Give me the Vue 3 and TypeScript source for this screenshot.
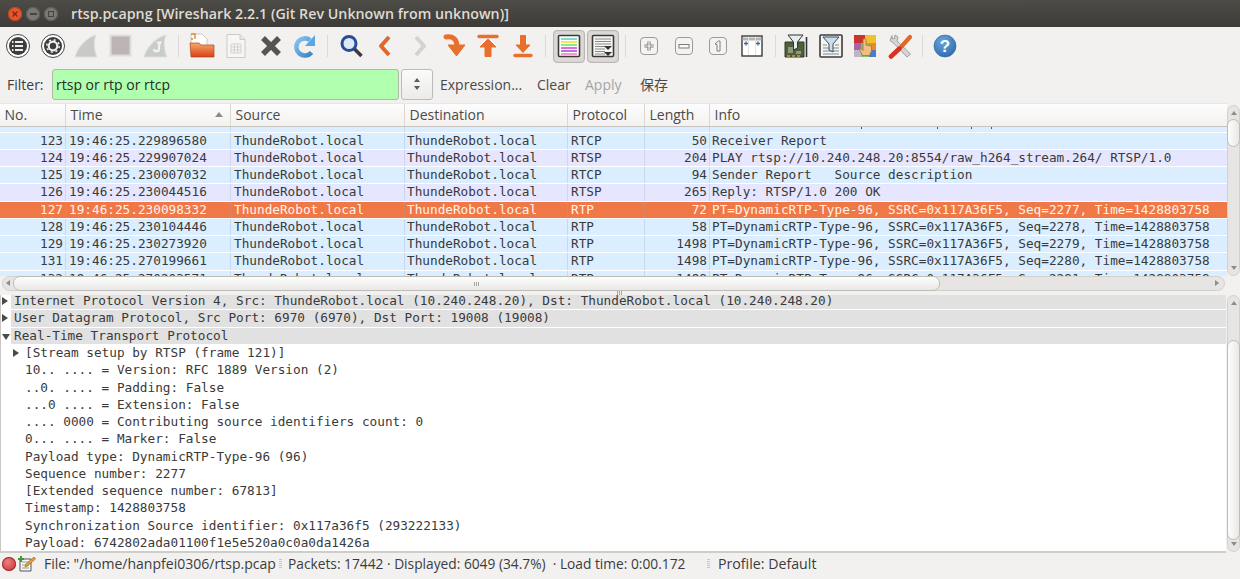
<script setup lang="ts">
interface Packet { no: string; time: string; proto: string; len: string; info: string; kind: string }
const pt = (s: string) => `PT=DynamicRTP-Type-96, SSRC=0x117A36F5, Seq=${s}, Time=1428803758`
const packets: Packet[] = [
  { no: '', time: '', proto: '', len: '', info: '', kind: 'blue' },
  { no: '123', time: '19:46:25.229896580', proto: 'RTCP', len: '50', info: 'Receiver Report', kind: 'blue' },
  { no: '124', time: '19:46:25.229907024', proto: 'RTSP', len: '204', info: 'PLAY rtsp://10.240.248.20:8554/raw_h264_stream.264/ RTSP/1.0', kind: 'lav' },
  { no: '125', time: '19:46:25.230007032', proto: 'RTCP', len: '94', info: 'Sender Report   Source description', kind: 'blue' },
  { no: '126', time: '19:46:25.230044516', proto: 'RTSP', len: '265', info: 'Reply: RTSP/1.0 200 OK', kind: 'lav' },
  { no: '127', time: '19:46:25.230098332', proto: 'RTP', len: '72', info: pt('2277'), kind: 'sel' },
  { no: '128', time: '19:46:25.230104446', proto: 'RTP', len: '58', info: pt('2278'), kind: 'blue' },
  { no: '129', time: '19:46:25.230273920', proto: 'RTP', len: '1498', info: pt('2279'), kind: 'blue' },
  { no: '131', time: '19:46:25.270199661', proto: 'RTP', len: '1498', info: pt('2280'), kind: 'blue' },
  { no: '132', time: '19:46:25.270203571', proto: 'RTP', len: '1498', info: pt('2281'), kind: 'blue' },
]
const ticks = [861, 937, 971, 991]
const sections = [
  'Internet Protocol Version 4, Src: ThundeRobot.local (10.240.248.20), Dst: ThundeRobot.local (10.240.248.20)',
  'User Datagram Protocol, Src Port: 6970 (6970), Dst Port: 19008 (19008)',
]
const fields = [
  '10.. .... = Version: RFC 1889 Version (2)',
  '..0. .... = Padding: False',
  '...0 .... = Extension: False',
  '.... 0000 = Contributing source identifiers count: 0',
  '0... .... = Marker: False',
  'Payload type: DynamicRTP-Type-96 (96)',
  'Sequence number: 2277',
  '[Extended sequence number: 67813]',
  'Timestamp: 1428803758',
  'Synchronization Source identifier: 0x117a36f5 (293222133)',
  'Payload: 6742802ada01100f1e5e520a0c0a0da1426a',
]
const columns = ['No.', 'Time', 'Source', 'Destination', 'Protocol', 'Length', 'Info']
</script>

<template>
  <div class="win">
    <header class="title">
      <span class="dot close"><svg width="8" height="8" viewBox="0 0 8 8"><path d="M1.5 1.5l5 5M6.5 1.5l-5 5" stroke="#7a2a12" stroke-width="1.4"/></svg></span>
      <span class="dot"><i class="dash"></i></span>
      <span class="dot"><i class="sq"></i></span>
      <span class="title-text">rtsp.pcapng [Wireshark 2.2.1 (Git Rev Unknown from unknown)]</span>
    </header>

    <div class="toolbar">
      <span class="tool"><svg width="26" height="26" viewBox="0 0 26 26"><circle cx="13" cy="13" r="11.5" fill="#fff" stroke="#444" stroke-width="1"/><circle cx="13" cy="13" r="9" fill="#3d3d3d"/><path d="M10 9h8M10 13h8M10 17h8" stroke="#eee" stroke-width="2"/><path d="M7 9h1.5M7 13h1.5M7 17h1.5" stroke="#eee" stroke-width="2"/></svg></span>
      <span class="tool"><svg width="26" height="26" viewBox="0 0 26 26"><circle cx="13" cy="13" r="11.5" fill="#fff" stroke="#444" stroke-width="1"/><circle cx="13" cy="13" r="9" fill="#3d3d3d"/><circle cx="13" cy="13" r="4.3" fill="none" stroke="#eee" stroke-width="2.2"/><circle cx="13" cy="13" r="6.2" fill="none" stroke="#eee" stroke-width="1.6" stroke-dasharray="2 2.87"/></svg></span>
      <span class="tool"><svg width="26" height="26" viewBox="0 0 26 26"><path d="M1 24C4 14 12 5 22 2c-3 6-2 16 1 22H1z" fill="#c9c9c7" stroke="#dededc"/></svg></span>
      <span class="tool"><svg width="26" height="26" viewBox="0 0 26 26"><rect x="2.5" y="2.5" width="20" height="20" fill="#bdb5b5" stroke="#dfdddb" stroke-width="2"/></svg></span>
      <span class="tool"><svg width="26" height="26" viewBox="0 0 26 26"><path d="M1 24C4 14 12 5 23 2c-3 6-2 16 1 22H1z" fill="#c9cdc7" stroke="#dededc"/><path d="M16 10v6c0 3-5 3-5 0" fill="none" stroke="#f1f1ef" stroke-width="2.2"/><path d="M13 9l6-1-2 5z" fill="#f1f1ef"/></svg></span>
      <span class="sep"></span>
      <span class="tool"><svg width="26" height="26" viewBox="0 0 26 26"><defs><linearGradient id="fo" x1="0" y1="0" x2="0" y2="1"><stop offset="0" stop-color="#f8a868"/><stop offset="1" stop-color="#d8401c"/></linearGradient></defs><path d="M2 1h11l5 5v8H2z" fill="#fff" stroke="#cfc8bc"/><path d="M2 6h2M2 1h4v5" fill="none" stroke="#d98a3a" stroke-width="1.400"/><path d="M1 10h9l2 2h13v12H2z" fill="url(#fo)" stroke="#a8481c" stroke-width=".7"/></svg></span>
      <span class="tool"><svg width="26" height="26" viewBox="0 0 26 26"><path d="M4 1.500h13l5 5v18H4z" fill="#f7f6f4" stroke="#cbcac6"/><path d="M17 1.500v5h5" fill="#e8e7e4" stroke="#cbcac6"/><path d="M8 11h10v9H8zM8 14h10M8 17h10M11.300 11v9M14.600 11v9" fill="none" stroke="#d2d1cd"/></svg></span>
      <span class="tool"><svg width="26" height="26" viewBox="0 0 26 26"><path d="M5 5l16 16M21 5L5 21" stroke="#555552" stroke-width="5.500"/></svg></span>
      <span class="tool"><svg width="26" height="26" viewBox="0 0 26 26"><defs><linearGradient id="rl" x1="0" y1="0" x2="1" y2="1"><stop offset="0" stop-color="#8cc4ee"/><stop offset="1" stop-color="#3a82c8"/></linearGradient></defs><path d="M19.500 19.500a8.600 8.600 0 1 1-1.500-12.500" fill="none" stroke="url(#rl)" stroke-width="4.600"/><path d="M23 2v11h-10z" fill="#5fa5e0"/></svg></span>
      <span class="sep"></span>
      <span class="tool"><svg width="26" height="26" viewBox="0 0 26 26"><circle cx="11" cy="10.500" r="7" fill="#dfe8f5" stroke="#2a4c98" stroke-width="3"/><path d="M16.500 16l7 7" stroke="#3a3a38" stroke-width="3.600"/></svg></span>
      <span class="tool"><svg width="26" height="26" viewBox="0 0 26 26"><path d="M17 4L9 13l8 9" fill="none" stroke="#e0672a" stroke-width="4" stroke-linejoin="round"/></svg></span>
      <span class="tool"><svg width="26" height="26" viewBox="0 0 26 26"><path d="M9 4l8 9-8 9" fill="none" stroke="#d3d2cf" stroke-width="4" stroke-linejoin="round"/></svg></span>
      <span class="tool"><svg width="26" height="26" viewBox="0 0 26 26"><path d="M5 4c7-1 11 2 11 10" fill="none" stroke="#e8702c" stroke-width="5" stroke-linecap="round"/><path d="M7 12h17l-8.500 11z" fill="#e8702c" stroke="#e8702c" stroke-linejoin="round"/></svg></span>
      <span class="tool"><svg width="26" height="26" viewBox="0 0 26 26"><path d="M4 3.500h18" stroke="#e8702c" stroke-width="3.400" stroke-linecap="round"/><path d="M5 14l8-8 8 8h-5v9.500h-6V14z" fill="#e8702c" stroke="#e8702c" stroke-linejoin="round"/></svg></span>
      <span class="tool"><svg width="26" height="26" viewBox="0 0 26 26"><path d="M5 22.500h16" stroke="#e8702c" stroke-width="3.400" stroke-linecap="round"/><path d="M6 12l7 7.500 7-7.500h-4.500V2.500h-5V12z" fill="#e8702c" stroke="#e8702c" stroke-linejoin="round"/></svg></span>
      <span class="sep"></span>
      <span class="tool on"><svg width="24" height="24" viewBox="0 0 24 24"><rect x="1.500" y="1.500" width="21" height="21" rx="1" fill="#fff" stroke="#3a3a38" stroke-width="1.600"/><path d="M4 5h16" stroke="#7fe0c8" stroke-width="2"/><path d="M4 8h16" stroke="#f2e85e" stroke-width="2"/><path d="M4 11h16" stroke="#8ee88a" stroke-width="2"/><path d="M4 14h16" stroke="#e070d8" stroke-width="2"/><path d="M4 17h16" stroke="#bf70e8" stroke-width="2"/><path d="M4 20h16" stroke="#f09ccc" stroke-width="2"/></svg></span>
      <span class="tool on"><svg width="24" height="24" viewBox="0 0 24 24"><rect x="1.500" y="1.500" width="21" height="21" rx="1" fill="#f5f5f3" stroke="#3a3a38" stroke-width="1.600"/><path d="M4 5h16M4 7.500h16M4 10h16M4 12.500h10M4 15h10M4 17.500h10M4 20h10" stroke="#8b8b88" stroke-width="1"/><path d="M13 12h8l-4 4zM13 18h8l-4 4z" fill="#333"/></svg></span>
      <span class="sep"></span>
      <span class="tool"><svg width="22" height="22" viewBox="0 0 22 22"><rect x="2.500" y="2.500" width="17" height="17" rx="3.500" fill="#f4f3f1" stroke="#9c9a96"/><path d="M11 6.500v9M6.500 11h9" stroke="#7e7c78" stroke-width="3.200"/><path d="M11 6.500v9M6.500 11h9" stroke="#f8f8f6" stroke-width="1.200"/></svg></span>
      <span class="tool"><svg width="22" height="22" viewBox="0 0 22 22"><rect x="2.500" y="2.500" width="17" height="17" rx="3.500" fill="#f4f3f1" stroke="#9c9a96"/><rect x="6" y="9.500" width="10" height="3.500" fill="#f8f8f6" stroke="#7e7c78"/></svg></span>
      <span class="tool"><svg width="22" height="22" viewBox="0 0 22 22"><rect x="2.500" y="2.500" width="17" height="17" rx="3.500" fill="#f4f3f1" stroke="#9c9a96"/><path d="M8 9l3.500-3h1.500v10h-3V9.500z" fill="#f8f8f6" stroke="#7e7c78"/></svg></span>
      <span class="tool"><svg width="24" height="24" viewBox="0 0 24 24"><rect x="2" y="2" width="20" height="20" fill="#fff" stroke="#3a3a38" stroke-width="1.400"/><path d="M2.500 5h19" stroke="#b5b5b2" stroke-width="3"/><path d="M8.500 3v18M15.500 3v18" stroke="#e2e2df"/><path d="M4 9.500h4M16 9.500h4M6 7.500v4M18 7.500v4" stroke="#3f6aa8" stroke-width="1.300"/></svg></span>
      <span class="sep narrow"></span>
      <span class="tool"><svg width="26" height="26" viewBox="0 0 26 26"><path d="M2 9h19v15H2z" fill="#4e5f3a" stroke="#2f3a26"/><path d="M5 14h5v6H5zM13 18h5v3h-5z" fill="#8f9a7a"/><path d="M4 23h3M9 23h3M14 23h3" stroke="#caa33a" stroke-width="1.600"/><path d="M23.500 4v20" stroke="#333" stroke-width="1.600"/><path d="M5 2h15l-5.500 7v6l-4 2V9z" fill="#e8eef0" stroke="#333"/></svg></span>
      <span class="tool"><svg width="26" height="26" viewBox="0 0 26 26"><rect x="2" y="2" width="22" height="22" rx="1" fill="#f4f4f2" stroke="#3d3d3b" stroke-width="1.600"/><path d="M5 15h16M5 18h16M5 21h16M5 12h4M17 12h4" stroke="#888" stroke-width="1.200"/><path d="M5 4h16l-6 7v8l-4-2v-6z" fill="#cfdde6" stroke="#33506a"/></svg></span>
      <span class="tool"><svg width="26" height="26" viewBox="0 0 26 26"><rect x="2" y="2" width="11" height="8" fill="#c8352c"/><rect x="13" y="2" width="11" height="8" fill="#f0c12c"/><rect x="2" y="10" width="7" height="7" fill="#a864a8"/><rect x="2" y="17" width="7" height="7" fill="#bcb6c6"/><rect x="17" y="10" width="7" height="7" fill="#e78a30"/><rect x="17" y="17" width="7" height="7" fill="#4a7dc4"/><rect x="9" y="10" width="8" height="14" fill="#84c45a"/><path d="M10.500 22.500L7 15.500l2.500.5 1.500 1.500V7c0-1.800 3-1.800 3 0v5l5.500 1v5l-2 4.500z" fill="#f2bc84" stroke="#a06a38" stroke-width=".7"/></svg></span>
      <span class="tool"><svg width="26" height="26" viewBox="0 0 26 26"><path d="M5 2.500l-2 5 4 3 13 13.500 3.500-3L10 8l1-4-3-2-.5 3.500H5z" fill="#d4d4d2" stroke="#8e8e8c" stroke-width=".8"/><path d="M14.500 13.500L23 4" stroke="#e2682a" stroke-width="4.200" stroke-linecap="round"/><path d="M12.500 15.500L4 23.500" stroke="#d8351f" stroke-width="4.600" stroke-linecap="round"/></svg></span>
      <span class="sep"></span>
      <span class="tool"><svg width="26" height="26" viewBox="0 0 26 26"><defs><radialGradient id="hp" cx=".4" cy=".3" r=".8"><stop offset="0" stop-color="#6aa5dc"/><stop offset="1" stop-color="#2a68ac"/></radialGradient></defs><circle cx="13" cy="13" r="11" fill="url(#hp)" stroke="#2d6299" stroke-width=".6"/><text x="13" y="19" text-anchor="middle" class="q">?</text></svg></span>
    </div>

    <div class="filter">
      <label class="flabel">Filter:</label>
      <div class="finput">rtsp or rtp or rtcp</div>
      <div class="fcombo"><svg width="8" height="14" viewBox="0 0 8 14"><path d="M4 1L7 5H1zM4 13L1 9h6z" fill="#5c5c5a"/></svg></div>
      <span class="flink expr">Expression...</span>
      <span class="flink clear">Clear</span>
      <span class="flink apply">Apply</span>
      <span class="flink save">保存</span>
    </div>

    <div class="list-area">
      <div class="list-main">
        <div class="cols head">
          <div v-for="c in columns" :key="c" class="hcell">
            {{ c }}
            <i v-if="c === 'Time'" class="sort"></i>
          </div>
        </div>
        <div class="packets">
          <div class="packets-in">
            <div v-for="(p, i) in packets" :key="i" class="cols row" :class="p.kind">
              <span class="c r">{{ p.no }}</span>
              <span class="c t">{{ p.time }}</span>
              <span class="c t">{{ p.no ? 'ThundeRobot.local' : '' }}</span>
              <span class="c d">{{ p.no ? 'ThundeRobot.local' : '' }}</span>
              <span class="c t">{{ p.proto }}</span>
              <span class="c r">{{ p.len }}</span>
              <span class="c d last">{{ p.info }}</span>
            </div>
          </div>
          <i v-for="x in ticks" :key="x" class="tick" :style="{ left: x + 'px' }"></i>
        </div>
        <div class="hscroll">
          <i class="harrow left"></i>
          <div class="hthumb"><i class="grip"></i></div>
          <i class="harrow right"></i>
        </div>
      </div>
      <div class="vscroll">
        <i class="varrow up"></i>
        <div class="vthumb list-thumb"></div>
        <i class="varrow down"></i>
      </div>
    </div>

    <div class="split"><i class="grip"></i></div>

    <div class="detail-area">
      <div class="details">
        <div class="details-in">
          <div v-for="s in sections" :key="s" class="dr sec">
            <i class="tri closed"></i>{{ s }}
          </div>
          <div class="dr sec"><i class="tri open"></i>Real-Time Transport Protocol</div>
          <div class="dr sub"><i class="tri closed"></i>[Stream setup by RTSP (frame 121)]</div>
          <div v-for="f in fields" :key="f" class="dr fld">{{ f }}</div>
        </div>
      </div>
      <div class="vscroll dv">
        <i class="varrow up"></i>
        <div class="vthumb detail-thumb"></div>
        <i class="varrow down"></i>
      </div>
    </div>

    <footer class="status">
      <i class="led"></i>
      <svg class="edit" width="18" height="18" viewBox="0 0 18 18"><path d="M2 4h11v12H2z" fill="#f6f6ee" stroke="#555"/><path d="M4 7h7M4 10h7M4 13h7" stroke="#999"/><path d="M3 1v6M0 4h6" stroke="#3a9a3a" stroke-width="2"/><path d="M7 12l1-3 8-7 1.500 2-8 7z" fill="#e2a13a" stroke="#8a5a20" stroke-width=".6"/></svg>
      <span class="st file">File: "/home/hanpfei0306/rtsp.pcap</span>
      <i class="sgrip"></i>
      <span class="st pk">Packets: 17442 · Displayed: 6049 (34.7%)&nbsp; · Load time: 0:00.172</span>
      <i class="sgrip"></i>
      <span class="st pf">Profile: Default</span>
    </footer>
  </div>
</template>

<style scoped>
.win { width: 1240px; height: 579px; display: flex; flex-direction: column; overflow: hidden; background: #f2f1f0; font-family: "Open Sans", "Noto Sans", sans-serif; color: #3c3c3c; }

.title { height: 27px; flex: none; display: flex; align-items: center; padding-left: 8px; box-sizing: border-box; background: linear-gradient(#4d4c47, #3c3b37); }
.dot { width: 14px; height: 14px; margin-right: 4px; border-radius: 50%; background: #7b7973; display: flex; align-items: center; justify-content: center; box-shadow: inset 0 0 0 1px #5d5b55; }
.close { background: #e8562e; box-shadow: inset 0 0 0 1px #c0431f; }
.dash { width: 7px; height: 2px; background: #45443f; }
.sq { width: 6px; height: 6px; border: 1px solid #45443f; box-sizing: border-box; }
.title-text { margin-left: 9px; color: #dfdbd2; font-size: 14.250px; font-weight: 600; white-space: nowrap; }

.toolbar { height: 41px; flex: none; display: flex; align-items: center; padding: 0 0 3px 1px; box-sizing: border-box; }
.tool { width: 34.400px; height: 33px; flex: none; display: flex; align-items: center; justify-content: center; box-sizing: border-box; border-radius: 4px; }
.tool.on { background: #dddad6; border: 1px solid #b9b7b3; box-shadow: inset 0 0 2px #c5c3bf; width: 32px; margin: 0 1.200px; }
.sep { width: 11.600px; height: 26px; flex: none; position: relative; }
.sep::after { content: ""; position: absolute; left: 5px; top: 2px; bottom: 2px; width: 1px; background: #dcdad6; }
.sep.narrow { width: 9.600px; }
.q { font-family: "Liberation Sans", sans-serif; font-size: 17px; font-weight: 700; fill: #fff; }

.filter { height: 35px; flex: none; display: flex; align-items: center; padding: 1px 0 4px 7px; box-sizing: border-box; font-size: 14px; white-space: nowrap; }
.flabel { width: 45px; flex: none; }
.finput { width: 347px; height: 31px; flex: none; box-sizing: border-box; background: #afffaf; border: 1px solid #b0b8a8; border-radius: 3px; padding-left: 3px; line-height: 29px; color: #2a2a2a; }
.fcombo { width: 32px; height: 31px; flex: none; margin-left: 2px; box-sizing: border-box; background: linear-gradient(#fbfbfa, #ecebe9); border: 1px solid #bdbbb7; border-radius: 3px; display: flex; align-items: center; justify-content: center; }
.flink { flex: none; color: #4a4a48; }
.expr { margin-left: 7px; width: 97px; }
.clear { width: 48px; }
.apply { width: 55px; color: #a5a5a2; }
.save { font-family: "Noto Sans CJK SC", sans-serif; }

.list-area { height: 188px; flex: none; display: flex; }
.list-main { width: 1227px; flex: none; display: flex; flex-direction: column; }
.cols { display: grid; grid-template-columns: 66px 165px 174px 163px 77px 65px 1fr; }
.head { height: 24px; flex: none; box-sizing: border-box; background: linear-gradient(#fdfdfd, #f3f2f0); border-bottom: 1px solid #c6c4c0; border-top: 1px solid #e8e7e4; }
.hcell { padding-left: 4.500px; font-size: 14px; line-height: 22px; border-right: 1px solid #dad8d4; position: relative; color: #4a4a48; }
.hcell:last-child { border-right: 0; }
.sort { position: absolute; right: 7px; top: 8px; width: 0; height: 0; border-left: 4px solid transparent; border-right: 4px solid transparent; border-bottom: 5px solid #8d8c88; }
.packets { height: 149px; flex: none; overflow: hidden; background: #fff; position: relative; }
.packets-in { margin-top: -11.700px; }
.tick { position: absolute; top: 0; width: 1px; height: 2px; background: #555; }
.row { height: 17.280px; box-sizing: border-box; border-bottom: 1px solid #fff; font-family: "DejaVu Sans Mono", monospace; font-size: 12.720px; line-height: 16px; white-space: pre; color: #3a3a3a; }
.row.blue { background: #daeeff; }
.row.lav { background: #e7e6ff; }
.row.sel { background: #f07746; color: #fff4ec; }
.c { overflow: hidden; border-right: 1px solid rgba(150, 170, 190, .28); padding-left: 3px; }
.d { padding-left: 2px; }
.r { text-align: right; padding: 0 2px 0 0; }
.last { border-right: 0; }
.hscroll { height: 15px; flex: none; position: relative; display: flex; align-items: center; box-sizing: border-box; margin: 0 2px; background: #e6e5e3; border: 1px solid #d3d1cd; border-radius: 8px; }
.hthumb { position: absolute; left: 10px; width: 927px; top: -1px; bottom: -1px; box-sizing: border-box; background: linear-gradient(#fdfdfc, #e9e8e6); border: 1px solid #bebcb8; border-radius: 7px; display: flex; align-items: center; justify-content: center; }
.grip { width: 6px; height: 4px; background: repeating-linear-gradient(90deg, #a8a6a2 0 1px, transparent 1px 2px); }
.harrow { position: absolute; width: 0; height: 0; top: 3px; border-top: 3.500px solid transparent; border-bottom: 3.500px solid transparent; }
.harrow.left { left: 3px; border-right: 4px solid #8d8c88; }
.harrow.right { right: 5px; border-left: 4px solid #8d8c88; }
.vscroll { width: 13px; flex: none; position: relative; background: #e6e5e3; border: 1px solid #d3d1cd; border-radius: 7px; box-sizing: border-box; margin-top: 2px; height: 171px; }
.vscroll.dv { height: 257px; margin-top: 0; }
.vthumb { position: absolute; left: -1px; right: -1px; box-sizing: border-box; background: linear-gradient(90deg, #fdfdfc, #e9e8e6); border: 1px solid #bebcb8; border-radius: 7px; }
.list-thumb { top: 13px; height: 28px; }
.detail-thumb { top: 44px; height: 200px; }
.varrow { position: absolute; left: 2.500px; width: 0; height: 0; border-left: 3.500px solid transparent; border-right: 3.500px solid transparent; }
.varrow.up { top: 5px; border-bottom: 4px solid #8d8c88; }
.varrow.down { bottom: 5px; border-top: 4px solid #8d8c88; }

.split { height: 4px; flex: none; display: flex; justify-content: center; align-items: center; }
.detail-area { height: 258px; flex: none; display: flex; }
.details { width: 1226px; height: 258px; margin-right: 1px; box-sizing: border-box; flex: none; overflow: hidden; background: #fff; border-left: 1px solid #c9c7c3; border-bottom: 2px solid #cfcdc9; }
.details-in { margin-top: -1.800px; }
.dr { height: 17.280px; box-sizing: border-box; position: relative; font-family: "DejaVu Sans Mono", monospace; font-size: 12.720px; line-height: 16px; white-space: pre; color: #3a3a3a; }
.sec { background: #e1e1e1; border-bottom: 1px solid #fff; padding-left: 3px; margin-left: 10px; }
.sub, .fld { padding-left: 24px; }
.tri { position: absolute; width: 0; height: 0; }
.tri.closed { top: 4px; border-top: 4px solid transparent; border-bottom: 4px solid transparent; border-left: 6px solid #4a4a48; }
.tri.open { top: 6px; border-left: 4px solid transparent; border-right: 4px solid transparent; border-top: 6px solid #4a4a48; }
.sec .tri { left: -9px; }
.sub .tri { left: 12px; }

.status { height: 26px; flex: none; display: flex; align-items: center; font-size: 14px; white-space: nowrap; padding-bottom: 5px; box-sizing: border-box; }
.led { width: 14px; height: 14px; margin-left: 2px; flex: none; border-radius: 50%; background: radial-gradient(circle at 40% 35%, #ee7f7f, #c4282c); box-shadow: inset 0 0 0 1px #a23035; }
.edit { margin-left: 2px; flex: none; }
.st { flex: none; }
.sgrip { width: 3px; height: 9px; flex: none; background: repeating-linear-gradient(#c9c7c3 0 1px, transparent 1px 2px); }
.file { margin-left: 8px; width: 235px; font-size: 14.050px; }
.pk { width: 419px; margin-left: 6px; font-size: 13.760px; }
.pf { margin-left: 8px; font-size: 14.200px; }
</style>
